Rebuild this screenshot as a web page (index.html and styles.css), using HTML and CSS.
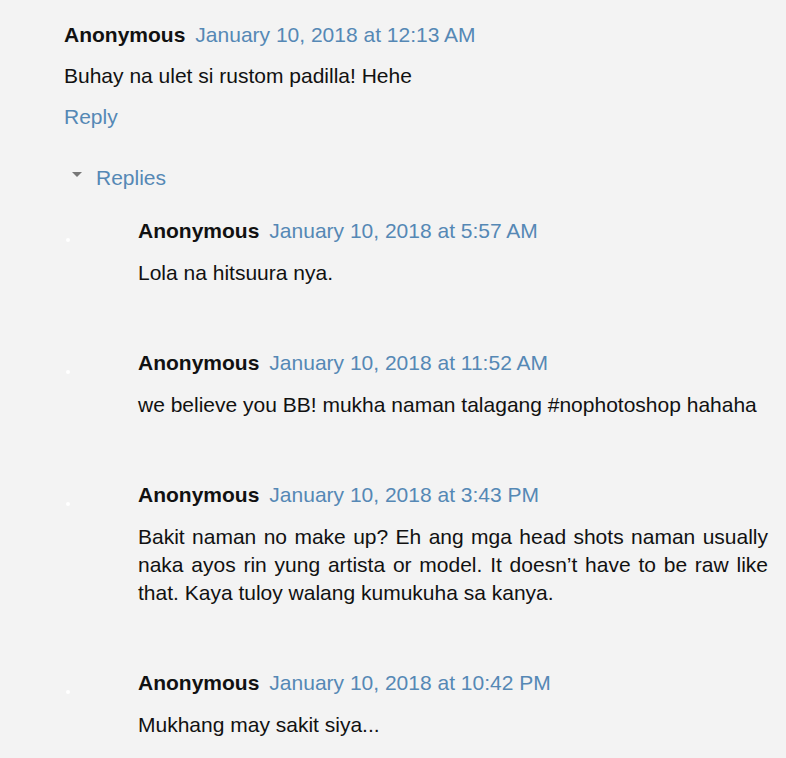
FILE: index.html
```html
<!DOCTYPE html>
<html>
<head>
<meta charset="utf-8">
<link rel="stylesheet" href="styles.css">
</head>
<body>
<div class="thread">
  <div class="comment top">
    <div class="head"><span class="author">Anonymous</span><a class="date" href="#">January 10, 2018 at 12:13 AM</a></div>
    <p class="body">Buhay na ulet si rustom padilla! Hehe</p>
    <a class="reply" href="#">Reply</a>
  </div>
  <div class="replies-toggle"><span class="tri"></span><a href="#">Replies</a></div>
  <ul class="replies">
    <li class="comment">
      <div class="head"><span class="author">Anonymous</span><a class="date" href="#">January 10, 2018 at 5:57 AM</a></div>
      <p class="body">Lola na hitsuura nya.</p>
    </li>
    <li class="comment">
      <div class="head"><span class="author">Anonymous</span><a class="date" href="#">January 10, 2018 at 11:52 AM</a></div>
      <p class="body">we believe you BB! mukha naman talagang #nophotoshop hahaha</p>
    </li>
    <li class="comment">
      <div class="head"><span class="author">Anonymous</span><a class="date" href="#">January 10, 2018 at 3:43 PM</a></div>
      <p class="body">Bakit naman no make up? Eh ang mga head shots naman usually naka ayos rin yung artista or model. It doesn’t have to be raw like that. Kaya tuloy walang kumukuha sa kanya.</p>
    </li>
    <li class="comment">
      <div class="head"><span class="author">Anonymous</span><a class="date" href="#">January 10, 2018 at 10:42 PM</a></div>
      <p class="body">Mukhang may sakit siya...</p>
    </li>
  </ul>
</div>
</body>
</html>
```
FILE: styles.css
```css
html, body {
  margin: 0;
  padding: 0;
  background: #f3f3f3;
}
body {
  font-family: "Liberation Sans", Arial, sans-serif;
  font-size: 21px;
  color: #111;
  overflow: hidden;
}
a {
  color: #5588b5;
  text-decoration: none;
}
.thread {
  padding: 21px 18px 0 64px;
}
.head {
  display: flex;
  gap: 10px;
  line-height: 28px;
}
.author {
  font-weight: bold;
  color: #111;
}
.body {
  margin: 13px 0 0;
  line-height: 28px;
  text-align: justify;
}
.replies .body {
  margin-top: 14px;
}
.reply {
  display: block;
  margin-top: 13px;
  line-height: 28px;
}
.replies-toggle {
  display: flex;
  align-items: center;
  margin-top: 33px;
  line-height: 28px;
}
.tri {
  width: 0;
  height: 0;
  border-left: 5px solid transparent;
  border-right: 5px solid transparent;
  border-top: 5px solid #777;
  margin: 0 14px 0 8px;
  position: relative;
  top: -4px;
}
.replies {
  list-style: none;
  margin: 25px 0 0;
  padding: 0 0 0 74px;
}
.replies .comment {
  position: relative;
  margin-bottom: 62px;
}
.replies .comment::before {
  content: "";
  position: absolute;
  left: -72px;
  top: 21px;
  width: 4px;
  height: 4px;
  border-radius: 50%;
  background: #fff;
}
```
